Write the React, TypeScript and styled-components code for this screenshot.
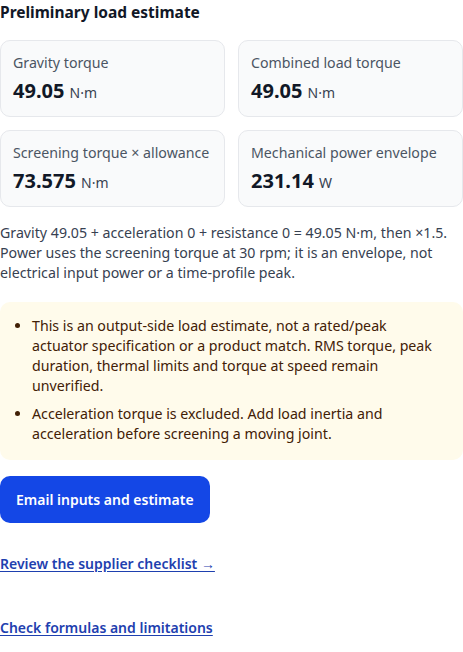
import React from 'react'
import styled, { createGlobalStyle } from 'styled-components'

const Global = createGlobalStyle`
  body {
    margin: 0;
    background: #ffffff;
    font-family: "Noto Sans", "Open Sans", Arial, sans-serif;
  }
`

const Section = styled.section`
  width: 463px;
  color: #111827;
`

const Title = styled.h2`
  margin: 0 0 16px;
  font-size: 15.5px;
  line-height: 24px;
  font-weight: 700;
  color: #111827;
`

const Grid = styled.div`
  display: grid;
  grid-template-columns: 1fr 1fr;
  column-gap: 13px;
  row-gap: 13px;
`

const Card = styled.div`
  border: 1px solid #e6e8ec;
  border-radius: 10px;
  background: #f9fafb;
  padding: 12px 12px 11px;
`

const Label = styled.div`
  font-size: 14.2px;
  line-height: 20px;
  color: #4b5563;
  margin-bottom: 4px;
  white-space: nowrap;
`

const Value = styled.div`
  height: 28px;
  font-size: 20px;
  line-height: 28px;
  font-weight: 700;
  color: #111827;
`

const Unit = styled.span`
  font-size: 14px;
  line-height: 1;
  font-weight: 400;
  color: #374151;
`

const Explain = styled.p`
  margin: 16px 0 19px;
  font-size: 14.2px;
  line-height: 20px;
  color: #374151;
`

const Note = styled.div`
  background: #fffbeb;
  border-radius: 10px;
  padding: 14px 25px 16px 12px;
  color: #422006;
`

const NoteList = styled.ul`
  margin: 0;
  padding-left: 20px;
  font-size: 14.2px;
  line-height: 20px;

  li + li {
    margin-top: 8px;
  }
`

const Button = styled.button`
  margin-top: 16px;
  height: 47px;
  padding: 0 16px;
  border: none;
  border-radius: 10px;
  background: #1447e6;
  color: #ffffff;
  font-family: inherit;
  font-size: 14px;
  font-weight: 600;
  cursor: pointer;
`

const LinkRow = styled.p<{ gap: number }>`
  margin: ${({ gap }) => gap}px 0 0;
  font-size: 14px;
  line-height: 20px;
`

const TextLink = styled.a`
  color: #1e40af;
  font-weight: 600;
  text-decoration: underline;
  text-underline-offset: 2px;
`

const results = [
  { label: 'Gravity torque', value: '49.05', unit: 'N·m' },
  { label: 'Combined load torque', value: '49.05', unit: 'N·m' },
  { label: 'Screening torque × allowance', value: '73.575', unit: 'N·m' },
  { label: 'Mechanical power envelope', value: '231.14', unit: 'W' },
]

export default function App() {
  return (
    <>
      <Global />
      <Section>
        <Title>Preliminary load estimate</Title>
        <Grid>
          {results.map((r) => (
            <Card key={r.label}>
              <Label>{r.label}</Label>
              <Value>
                {r.value} <Unit>{r.unit}</Unit>
              </Value>
            </Card>
          ))}
        </Grid>
        <Explain>
          Gravity 49.05 + acceleration 0 + resistance 0 = 49.05 N·m, then ×1.5. Power uses the
          screening torque at 30 rpm; it is an envelope, not electrical input power or a
          time-profile peak.
        </Explain>
        <Note>
          <NoteList>
            <li>
              This is an output-side load estimate, not a rated/peak actuator specification or a
              product match. RMS torque, peak duration, thermal limits and torque at speed remain
              unverified.
            </li>
            <li>
              Acceleration torque is excluded. Add load inertia and acceleration before screening a
              moving joint.
            </li>
          </NoteList>
        </Note>
        <Button type="button">Email inputs and estimate</Button>
        <LinkRow gap={31}>
          <TextLink href="#checklist">Review the supplier checklist →</TextLink>
        </LinkRow>
        <LinkRow gap={44}>
          <TextLink href="#formulas">Check formulas and limitations</TextLink>
        </LinkRow>
      </Section>
    </>
  )
}
